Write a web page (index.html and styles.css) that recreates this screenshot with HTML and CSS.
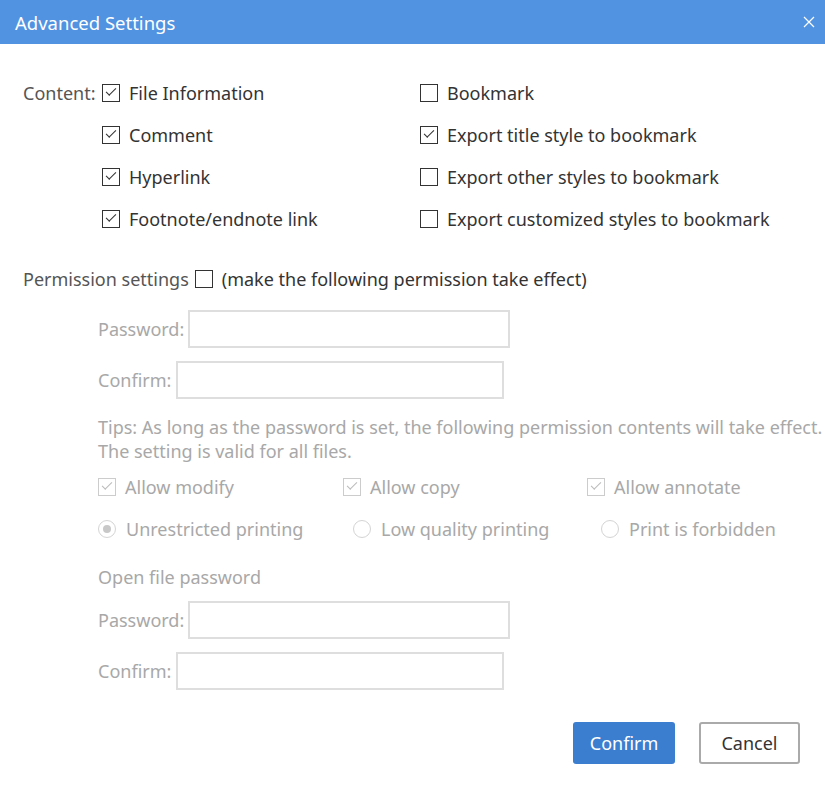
FILE: index.html
```html
<!DOCTYPE html>
<html lang="en">
<head>
    <meta charset="UTF-8">
    <title>Advanced Settings</title>
    <link rel="stylesheet" href="styles.css">
</head>
<body>
    <div class="dialog">
        <div class="title-bar">
            <span class="title">Advanced Settings</span>
            <svg class="close" width="12" height="12" viewBox="0 0 12 12">
                <path d="M1 1 L11 11 M11 1 L1 11" stroke="#fff" stroke-width="1.2" fill="none"/>
            </svg>
        </div>

        <div class="body">
            <div class="content-grid">
                <div class="label">Content:</div>
                <label class="opt"><span class="box checked"></span>File Information</label>
                <label class="opt"><span class="box"></span>Bookmark</label>

                <div></div>
                <label class="opt"><span class="box checked"></span>Comment</label>
                <label class="opt"><span class="box checked"></span>Export title style to bookmark</label>

                <div></div>
                <label class="opt"><span class="box checked"></span>Hyperlink</label>
                <label class="opt"><span class="box"></span>Export other styles to bookmark</label>

                <div></div>
                <label class="opt"><span class="box checked"></span>Footnote/endnote link</label>
                <label class="opt"><span class="box"></span>Export customized styles to bookmark</label>
            </div>

            <div class="perm-head">
                <span class="label">Permission settings</span>
                <span class="box"></span>
                <span class="dark">(make the following permission take effect)</span>
            </div>

            <div class="disabled">
                <div class="field">
                    <span>Password:</span>
                    <div class="input wide"></div>
                </div>
                <div class="field confirm">
                    <span>Confirm:</span>
                    <div class="input"></div>
                </div>

                <div class="tips">
                    Tips: As long as the password is set, the following permission contents will take effect.<br>
                    The setting is valid for all files.
                </div>

                <div class="opts-row checks">
                    <label class="opt"><span class="box checked"></span>Allow modify</label>
                    <label class="opt"><span class="box checked"></span>Allow copy</label>
                    <label class="opt"><span class="box checked"></span>Allow annotate</label>
                </div>
                <div class="opts-row radios">
                    <label class="opt"><span class="radio on"></span>Unrestricted printing</label>
                    <label class="opt"><span class="radio"></span>Low quality printing</label>
                    <label class="opt"><span class="radio"></span>Print is forbidden</label>
                </div>

                <div class="sub-head">Open file password</div>
                <div class="field second">
                    <span>Password:</span>
                    <div class="input wide"></div>
                </div>
                <div class="field confirm">
                    <span>Confirm:</span>
                    <div class="input"></div>
                </div>
            </div>

            <div class="actions">
                <button class="btn primary">Confirm</button>
                <button class="btn">Cancel</button>
            </div>
        </div>
    </div>
</body>
</html>
```

FILE: styles.css
```css
body {
    margin: 0;
    padding: 0;
    background-color: #fff;
    font-family: "Noto Sans", "Open Sans", sans-serif;
    color: #333;
    overflow: hidden;
}

.dialog {
    width: 825px;
    height: 789px;
    overflow: hidden;
}

.title-bar {
    height: 44px;
    background-color: #5193e1;
    display: flex;
    align-items: center;
    justify-content: space-between;
    padding: 0 10px 0 15px;
}

.title {
    color: #fff;
    font-size: 18.5px;
}

.close {
    display: block;
}

.body {
    padding: 28px 25px 0 23px;
    font-size: 18px;
}

.content-grid {
    display: grid;
    grid-template-columns: 79px 318px auto;
    grid-auto-rows: 42px;
}

.label {
    color: #555;
    display: flex;
    align-items: center;
}

.opt {
    display: flex;
    align-items: center;
    white-space: nowrap;
}

.box {
    width: 16px;
    height: 16px;
    border: 1px solid #333;
    margin-right: 9px;
    flex-shrink: 0;
    position: relative;
}

.box.checked::after {
    content: "";
    position: absolute;
    left: 3px;
    top: 3px;
    width: 9px;
    height: 4px;
    border-left: 1.5px solid #333;
    border-bottom: 1.5px solid #333;
    transform: rotate(-45deg);
}

.perm-head {
    display: flex;
    align-items: center;
    height: 30px;
    margin-top: 24px;
}

.perm-head .box {
    margin-left: 6px;
}

.disabled {
    padding-left: 75px;
    color: #a8a8a8;
}

.disabled .box {
    border-color: #ccc;
}

.disabled .box.checked::after {
    border-color: #bbb;
}

.field {
    display: flex;
    align-items: center;
    margin-top: 16px;
}

.field.confirm {
    margin-top: 13px;
}

.field.second {
    margin-top: 9px;
}

.input {
    width: 324px;
    height: 34px;
    border: 2px solid #dedede;
    margin-left: 5px;
}

.input.wide {
    width: 318px;
    margin-left: 4px;
}

.tips {
    margin-top: 16px;
    line-height: 24px;
    white-space: nowrap;
}

.opts-row {
    display: grid;
    height: 42px;
    align-items: center;
}

.checks {
    margin-top: 3px;
    grid-template-columns: 245px 244px auto;
}

.radios {
    grid-template-columns: 255px 248px auto;
}

.radio {
    width: 16px;
    height: 16px;
    border: 1px solid #d4d4d4;
    border-radius: 50%;
    margin-right: 10px;
    position: relative;
}

.radio.on::after {
    content: "";
    position: absolute;
    left: 4px;
    top: 4px;
    width: 8px;
    height: 8px;
    border-radius: 50%;
    background-color: #c8c8c8;
}

.sub-head {
    height: 30px;
    line-height: 30px;
    margin-top: 12px;
}

.actions {
    display: flex;
    justify-content: flex-end;
    gap: 24px;
    margin-top: 32px;
}

.btn {
    width: 101px;
    height: 42px;
    font-family: inherit;
    font-size: 18px;
    color: #333;
    background-color: #fff;
    border: 2px solid #aaa;
    border-radius: 3px;
    cursor: pointer;
}

.btn.primary {
    width: 102px;
    background-color: #3b7dcf;
    border: none;
    color: #fff;
}
```
